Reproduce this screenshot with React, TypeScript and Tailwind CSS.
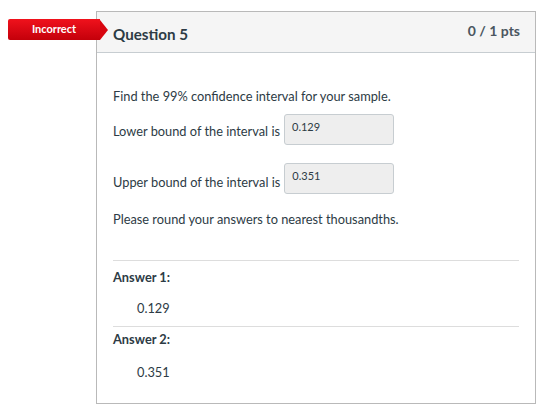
import React from 'react';

const font = { fontFamily: 'Lato, "Liberation Sans", sans-serif' };

function AnswerInput({ value }: { value: string }) {
  return (
    <div className="w-[110px] h-[31px] bg-[#eeeeee] border border-[#c7cdd1] rounded-[3px] pl-[7px] pt-[5px] text-[11px] leading-[14px] text-[#2d3b45]">
      {value}
    </div>
  );
}

export default function App() {
  return (
    <div className="w-[543px] h-[409px] bg-white text-[#2d3b45]" style={font}>
      <div className="pt-[11px] pl-[96px]">
        <div className="relative w-[440px] h-[393px] border border-[#b9b9b9]">
          {/* Incorrect flag */}
          <div className="absolute left-[-89px] top-[7px] flex items-center z-10">
            <div className="w-[92px] h-[21px] rounded-l-[2px] bg-gradient-to-b from-[#f0121c] to-[#c4000a] flex items-center justify-center text-white text-[11px] font-bold">
              Incorrect
            </div>
            <div className="w-0 h-0 border-y-[10.5px] border-y-transparent border-l-[8px] border-l-[#d8050f]" />
          </div>

          {/* Header */}
          <div className="h-[41px] bg-[#f5f5f5] border-b border-[#c7cdd1] flex items-center justify-between pl-[16px] pr-[15px]">
            <span className="text-[15.2px] font-bold mt-[4px]">Question 5</span>
            <span className="text-[14px] font-bold text-[#4a5660] -mt-[3px]">0 / 1 pts</span>
          </div>

          {/* Body */}
          <div className="px-[16px] text-[12.8px] leading-[20px]">
            <p className="mt-[33px]">Find the 99% confidence interval for your sample.</p>

            <div className="mt-[8px] flex items-end gap-[4px]">
              <span className="pb-[4px]">Lower bound of the interval is</span>
              <AnswerInput value="0.129" />
            </div>

            <div className="mt-[18px] flex items-end gap-[4px]">
              <span className="pb-[2px]">Upper bound of the interval is</span>
              <AnswerInput value="0.351" />
            </div>

            <p className="mt-[15px]">Please round your answers to nearest thousandths.</p>

            <div className="mt-[31px] border-t border-[#dddddd]">
              <p className="mt-[6px] font-bold">Answer 1:</p>
              <p className="mt-[11px] pl-[24px]">0.129</p>
            </div>

            <div className="mt-[8px] border-t border-[#dddddd]">
              <p className="mt-[2px] font-bold">Answer 2:</p>
              <p className="mt-[13px] pl-[24px]">0.351</p>
            </div>
          </div>
        </div>
      </div>
    </div>
  );
}
